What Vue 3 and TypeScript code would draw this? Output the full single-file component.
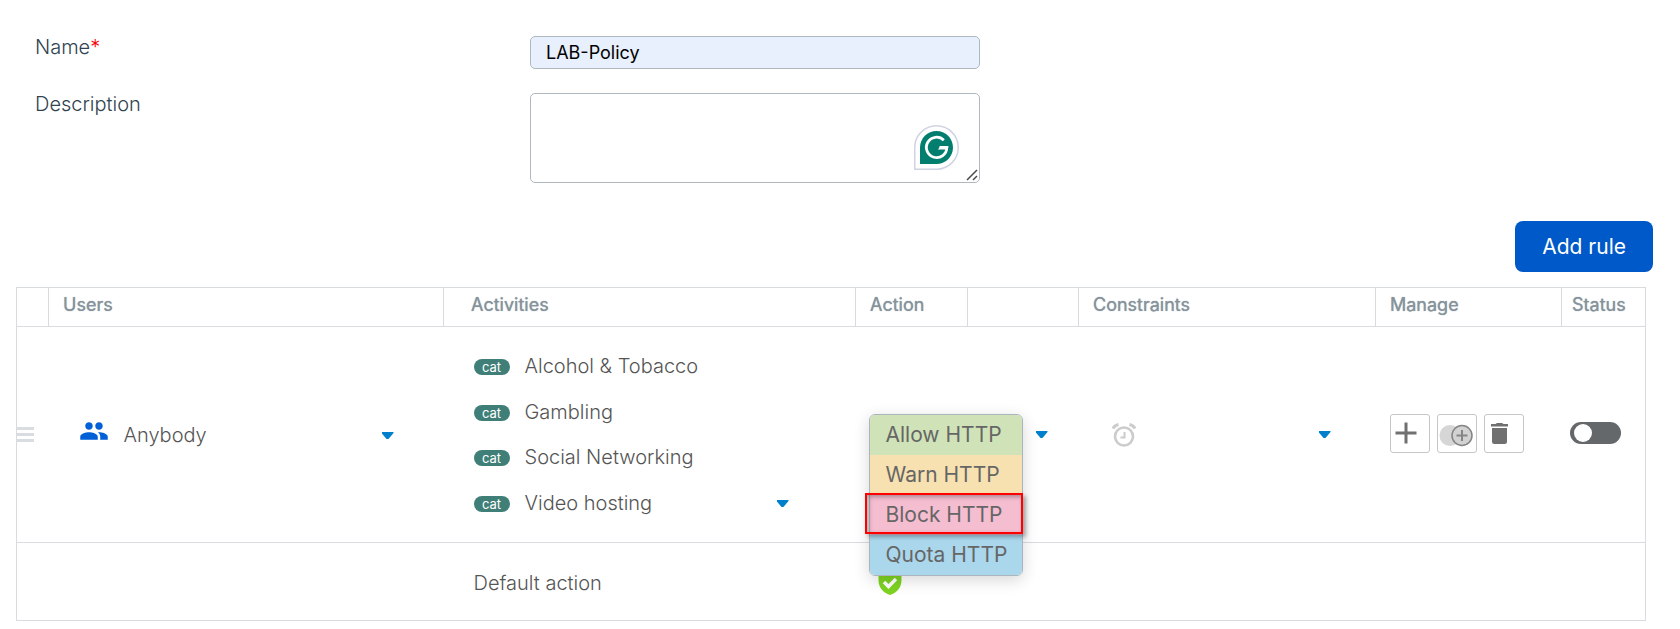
<script setup lang="ts">
import { ref } from 'vue'

interface ActionOption {
  id: string
  label: string
}

const policyName = ref('LAB-Policy')
const description = ref('')
const enabled = ref(false)
const menuOpen = ref(true)
const selected = ref('block')

const activities: string[] = ['Alcohol & Tobacco', 'Gambling', 'Social Networking', 'Video hosting']

const actions: ActionOption[] = [
  { id: 'allow', label: 'Allow HTTP' },
  { id: 'warn', label: 'Warn HTTP' },
  { id: 'block', label: 'Block HTTP' },
  { id: 'quota', label: 'Quota HTTP' },
]
</script>

<template>
  <main class="page">
    <form class="form" @submit.prevent>
      <label class="label" for="policy-name">Name<span class="required">*</span></label>
      <input id="policy-name" v-model="policyName" class="field name-field" type="text" required />
      <label class="label" for="policy-description">Description</label>
      <div class="area-wrap">
        <textarea id="policy-description" v-model="description" class="field area"></textarea>
        <svg class="assistant" viewBox="0 0 45 45" aria-hidden="true">
          <path d="M.75 44.25V22.5A21.75 21.75 0 1 1 22.5 44.25Z" fill="#fff" stroke="#d0d3e2" stroke-width="1.5" />
          <path d="M6 39V22.500A16.500 16.500 0 1 1 22.500 39Z" fill="#027e6f" />
          <path d="M29.800 15.200A10.200 10.200 0 1 0 32.800 22.500H25.500" fill="none" stroke="#fff" stroke-width="2.800" />
          <path d="M23.800 24.500L26.800 21H34.200V22.500L32.500 24.500Z" fill="#fff" />
        </svg>
        <svg class="grip" viewBox="0 0 12 12" aria-hidden="true">
          <path d="M1 11L11 1M7 11L11 7" stroke="#4a4a4a" stroke-width="1.500" />
        </svg>
      </div>
    </form>

    <div class="toolbar">
      <button class="add" type="button">Add rule</button>
    </div>

    <table class="rules">
      <colgroup>
        <col class="c-drag" /><col class="c-users" /><col class="c-activities" /><col class="c-action" />
        <col class="c-menu" /><col class="c-constraints" /><col class="c-manage" /><col class="c-status" />
      </colgroup>
      <thead>
        <tr>
          <th></th>
          <th>Users</th>
          <th class="th-activities">Activities</th>
          <th>Action</th>
          <th></th>
          <th>Constraints</th>
          <th>Manage</th>
          <th class="th-status">Status</th>
        </tr>
      </thead>
      <tbody>
        <tr class="rule">
          <td>
            <svg class="drag" viewBox="0 0 17 15" aria-hidden="true">
              <path d="M0 1.500H17M0 7.500H17M0 13.500H17" stroke="#d9dde1" stroke-width="3" />
            </svg>
          </td>
          <td>
            <div class="users">
              <svg class="people" viewBox="0 0 24 24" aria-hidden="true">
                <path fill="#0060d6" d="M16 11c1.660 0 2.990-1.340 2.990-3S17.660 5 16 5s-3 1.340-3 3 1.340 3 3 3zm-8 0c1.660 0 2.990-1.340 2.990-3S9.660 5 8 5 5 6.340 5 8s1.340 3 3 3zm0 2c-2.330 0-7 1.170-7 3.500V19h14v-2.500c0-2.330-4.670-3.500-7-3.500zm8 0c-.290 0-.620.020-.970.050 1.160.840 1.970 1.970 1.970 3.450V19h6v-2.500c0-2.330-4.670-3.500-7-3.500z" />
              </svg>
              <span>Anybody</span>
              <button class="caret" type="button" aria-label="Choose users"></button>
            </div>
          </td>
          <td>
            <div class="activities">
              <ul class="list">
                <li v-for="name in activities" :key="name"><span class="badge">cat</span>{{ name }}</li>
              </ul>
              <button class="caret" type="button" aria-label="Choose activities"></button>
            </div>
          </td>
          <td>
            <div class="action">
              <div v-if="menuOpen" class="menu" role="listbox" aria-label="Action">
                <button
                  v-for="option in actions"
                  :key="option.id"
                  type="button"
                  role="option"
                  :aria-selected="option.id === selected"
                  :class="['option', option.id, { selected: option.id === selected }]"
                  @click="selected = option.id"
                >{{ option.label }}</button>
              </div>
            </div>
          </td>
          <td>
            <div class="toggle-menu">
              <button class="caret" type="button" aria-label="Choose action" @click="menuOpen = !menuOpen"></button>
            </div>
          </td>
          <td>
            <div class="constraints">
              <svg class="alarm" viewBox="0 0 24 24" fill="none" stroke="#ccc" aria-hidden="true">
                <circle cx="12" cy="13.500" r="9" stroke-width="2.600" />
                <path d="M1 5.500C2 3.500 4 2 6.500 1.500M23 5.500C22 3.500 20 2 17.500 1.500" stroke-width="3.200" />
                <path d="M12.500 9V14.500H8.500" stroke-width="2" />
              </svg>
              <button class="caret" type="button" aria-label="Choose constraints"></button>
            </div>
          </td>
          <td>
            <div class="manage">
              <button class="tool" type="button" aria-label="Add rule below">
                <svg viewBox="0 0 38 37" aria-hidden="true"><path d="M15 7.500V28.500M4.500 18H25.500" stroke="#707070" stroke-width="3" /></svg>
              </button>
              <button class="tool" type="button" aria-label="Duplicate rule">
                <svg viewBox="0 0 38 37" aria-hidden="true">
                  <circle cx="12" cy="20.500" r="10.500" fill="#d6d6d6" />
                  <circle cx="24" cy="20.500" r="10" fill="#d2d2d2" stroke="#858585" stroke-width="1.500" />
                  <path d="M24 15V26M18.500 20.500H29.500" stroke="#858585" stroke-width="2" />
                </svg>
              </button>
              <button class="tool" type="button" aria-label="Delete rule">
                <svg viewBox="0 0 38 37" aria-hidden="true">
                  <path d="M6 9H10.500L12 8H17L18.500 9H23V11.500H6ZM7 13H22V26.500Q22 29 19.500 29H9.500Q7 29 7 26.500Z" fill="#707070" />
                </svg>
              </button>
            </div>
          </td>
          <td>
            <input v-model="enabled" class="switch" type="checkbox" role="switch" aria-label="Rule status" />
          </td>
        </tr>
        <tr class="default">
          <td></td>
          <td></td>
          <td class="default-label">Default action</td>
          <td>
            <svg class="shield" viewBox="0 0 24 28" role="img" aria-label="Allowed">
              <path d="M12 0L23.500 4V13C23.500 20.500 19 25.500 12 28C5 25.500 .500 20.500 .500 13V4Z" fill="#7ed321" />
              <path d="M6 15L10.500 19.500L18 12" fill="none" stroke="#fff" stroke-width="3.500" />
            </svg>
          </td>
          <td></td>
          <td></td>
          <td></td>
          <td></td>
        </tr>
      </tbody>
    </table>
  </main>
</template>

<style>
body {
  margin: 0;
  background: #fff;
}
</style>

<style scoped>
* {
  box-sizing: border-box;
}

.page {
  padding: 36px 27px 8px 16px;
  font-family: Inter, "Liberation Sans", sans-serif;
  font-size: 20px;
  font-weight: 300;
  line-height: 24px;
  color: #555;
}

button,
input,
textarea {
  font: inherit;
  margin: 0;
}

button {
  padding: 0;
  border: 0;
  background: none;
  cursor: pointer;
}

.form {
  display: grid;
  grid-template-columns: 495px minmax(0, 450px);
  row-gap: 24px;
  padding-left: 19px;
}

.label {
  height: 24px;
  margin-top: -1px;
  color: #30434f;
}

.required {
  color: #f00;
}

.field {
  display: block;
  width: 100%;
  border: 1px solid #b0b8bf;
  border-radius: 5px;
  padding: 0 15px;
  font-size: 18px;
  font-weight: 400;
  color: #000;
  background: #fff;
}

.name-field {
  height: 33px;
  background: #e8effd;
}

.area-wrap {
  position: relative;
}

.area {
  height: 90px;
}

.area::-webkit-resizer {
  background: transparent;
}

.assistant {
  position: absolute;
  right: 21px;
  bottom: 13px;
  width: 45px;
  height: 45px;
}

.grip {
  position: absolute;
  right: 2px;
  bottom: 2px;
  width: 12px;
  height: 12px;
  pointer-events: none;
}

.toolbar {
  display: flex;
  justify-content: flex-end;
  margin: 38px 0 15px;
}

.add {
  height: 51px;
  padding: 0 27px;
  border-radius: 8px;
  background: #0059c9;
  color: #fff;
  font-size: 21px;
  font-weight: 400;
}

.rules {
  width: calc(100% - 7px);
  table-layout: fixed;
  border-collapse: collapse;
  border: 1px solid #d9dcdf;
}

.c-drag { width: 32px; }
.c-users { width: 395px; }
.c-activities { width: 412px; }
.c-action { width: 112px; }
.c-menu { width: 111px; }
.c-constraints { width: 297px; }
.c-manage { width: 186px; }
.c-status { width: 84px; }

th {
  height: 39px;
  padding: 0 0 4px 14px;
  border: 1px solid #d9dcdf;
  text-align: left;
  font-size: 18px;
  font-weight: 400;
  color: #87939c;
  text-shadow: 0 0 1px #87939c;
}

.th-activities {
  padding-left: 27px;
}

.th-status {
  padding-left: 10px;
}

td {
  padding: 0;
  border-bottom: 1px solid #d9dcdf;
  vertical-align: middle;
}

.rule {
  height: 216px;
}

.default {
  height: 78px;
}

.drag {
  display: block;
  width: 17px;
  height: 15px;
}

.caret {
  flex: none;
  width: 12px;
  height: 7px;
  margin-left: auto;
  background: #0080cc;
  clip-path: polygon(0 0, 100% 0, 100% 15%, 58% 100%, 42% 100%, 0 15%);
}

.users {
  display: flex;
  align-items: center;
  padding: 0 50px 0 30px;
}

.users .caret {
  margin-top: 2px;
}

.people {
  width: 30px;
  height: 30px;
  margin: 0 15px 8px 0;
}

.activities {
  display: flex;
  align-items: flex-end;
  padding: 0 67px 0 30px;
}

.activities .caret {
  margin-bottom: 19px;
}

.list {
  display: grid;
  grid-auto-rows: 1fr;
  height: 183px;
  margin: 0;
  padding: 0;
  list-style: none;
}

.list li {
  display: flex;
  align-items: center;
  white-space: nowrap;
}

.badge {
  width: 36px;
  height: 16px;
  margin: 2px 15px 0 0;
  border-radius: 8px;
  background: #3f7f78;
  color: #fff;
  font-size: 13px;
  font-weight: 400;
  line-height: 16px;
  text-align: center;
}

.action {
  position: relative;
  height: 40px;
  margin-bottom: 2px;
}

.menu {
  position: absolute;
  z-index: 1;
  top: 0;
  left: 13px;
  width: 154px;
  border: 1px solid #acb5bd;
  border-radius: 6px;
  box-shadow: 0 4px 16px rgba(0, 0, 0, 0.16);
}

.option {
  display: block;
  width: 100%;
  height: 40px;
  padding-left: 16px;
  color: #666;
  font-size: 21px;
  font-weight: 400;
  text-align: left;
}

.allow {
  border-radius: 5px 5px 0 0;
  background: #d0e3b8;
}

.warn {
  background: #f7e1b0;
}

.block {
  background: #f5bdd0;
}

.quota {
  border-radius: 0 0 5px 5px;
  background: #abd7ec;
}

.selected {
  position: relative;
}

.selected::after {
  content: "";
  position: absolute;
  inset: -2px -1px 1px -5px;
  border: 2px solid #f00;
  box-shadow: 3px 3px 4px rgba(0, 0, 0, 0.3), inset 2px 2px 4px rgba(0, 0, 0, 0.3);
}

.toggle-menu {
  display: flex;
  padding-right: 31px;
}

.constraints {
  display: flex;
  align-items: center;
  padding: 0 45px 0 33px;
}

.alarm {
  width: 24px;
  height: 24px;
}

.manage {
  display: flex;
  gap: 7px;
  margin-bottom: 2px;
  padding-left: 14px;
}

.tool {
  width: 40px;
  height: 39px;
  border: 1px solid #c6c6c6;
  border-radius: 3px;
}

.tool svg {
  display: block;
  width: 38px;
  height: 37px;
}

.switch {
  appearance: none;
  display: block;
  width: 51px;
  height: 22px;
  margin: 0 0 3px 8px;
  padding: 2px 4px;
  border-radius: 11px;
  background: #65686a;
  cursor: pointer;
}

.switch::before {
  content: "";
  display: block;
  width: 18px;
  height: 18px;
  border-radius: 50%;
  background: #fff;
}

.switch:checked::before {
  margin-left: auto;
}

.default-label {
  padding: 2px 0 0 30px;
}

.shield {
  display: block;
  width: 24px;
  height: 28px;
  margin: 0 0 2px 22px;
}
</style>
